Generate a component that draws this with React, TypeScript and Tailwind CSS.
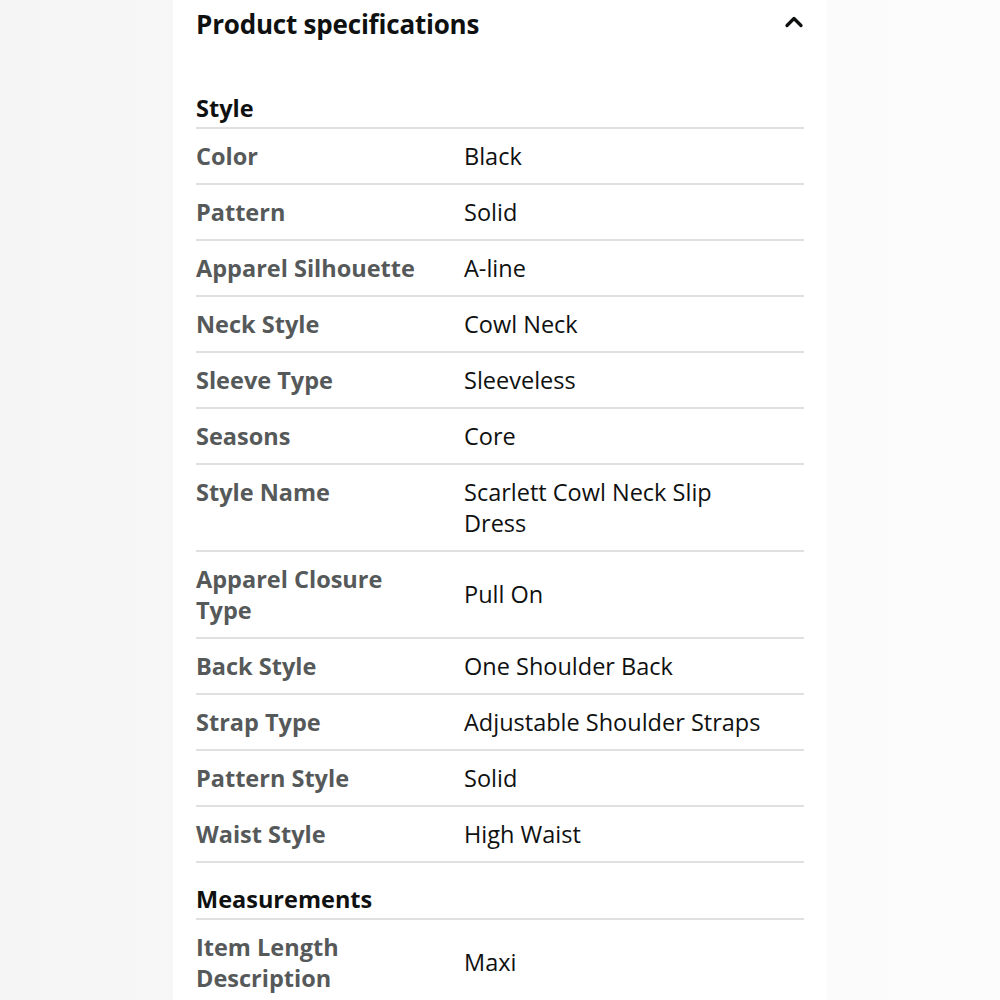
import { ChevronUp } from 'lucide-react';

type Spec = { label: string; value: string };

const styleSpecs: Spec[] = [
  { label: 'Color', value: 'Black' },
  { label: 'Pattern', value: 'Solid' },
  { label: 'Apparel Silhouette', value: 'A-line' },
  { label: 'Neck Style', value: 'Cowl Neck' },
  { label: 'Sleeve Type', value: 'Sleeveless' },
  { label: 'Seasons', value: 'Core' },
  { label: 'Style Name', value: 'Scarlett Cowl Neck Slip Dress' },
  { label: 'Apparel Closure Type', value: 'Pull On' },
  { label: 'Back Style', value: 'One Shoulder Back' },
  { label: 'Strap Type', value: 'Adjustable Shoulder Straps' },
  { label: 'Pattern Style', value: 'Solid' },
  { label: 'Waist Style', value: 'High Waist' },
];

const measurementSpecs: Spec[] = [{ label: 'Item Length Description', value: 'Maxi' }];

function SpecRow({ label, value }: Spec) {
  return (
    <div className="flex border-b-2 border-[#e0e0e0] py-[11.5px] leading-[31px]">
      <div className="w-[268px] shrink-0 pr-[36px] self-start font-bold text-[#565959]">{label}</div>
      <div className="w-[305px] self-center text-[#0f1111]">{value}</div>
    </div>
  );
}

function Section({ title, specs }: { title: string; specs: Spec[] }) {
  return (
    <div>
      <div className="border-b-2 border-[#e0e0e0] pt-[21px] pb-[3px] font-bold text-[#0f1111] leading-[31px]">
        {title}
      </div>
      {specs.map((s) => (
        <SpecRow key={s.label} {...s} />
      ))}
    </div>
  );
}

export default function App() {
  return (
    <div
      className="h-[1000px] overflow-hidden bg-gradient-to-r from-[#f5f5f6] via-[#f9f9fa] to-[#fcfcfc] text-[23.5px]"
      style={{ fontFamily: '"Open Sans", "Noto Sans", Arial, sans-serif' }}
    >
      <div className="ml-[173px] w-[654px] h-full bg-white px-[23px]">
        <div className="flex items-center justify-between h-[48px] mb-[24px]">
          <h2 className="text-[26px] font-bold text-[#0f1111] tracking-[-0.2px]">Product specifications</h2>
          <ChevronUp className="w-[28px] h-[28px] text-[#0f1111] -mt-[5px] -mr-[4px]" strokeWidth={2.8} />
        </div>
        <Section title="Style" specs={styleSpecs} />
        <Section title="Measurements" specs={measurementSpecs} />
      </div>
    </div>
  );
}
